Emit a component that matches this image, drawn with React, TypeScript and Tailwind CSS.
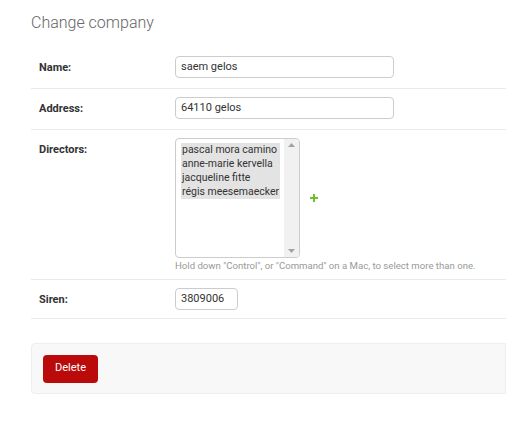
const directors = [
  "pascal mora camino",
  "anne-marie kervella",
  "jacqueline fitte",
  "régis meesemaecker",
];

function Row({ label, children, pb = "pb-[10px]" }: { label: string; children: React.ReactNode; pb?: string }) {
  return (
    <div className={`flex items-start pl-2 pt-2 ${pb} border-b border-[#eaeaea]`}>
      <label className="w-[136px] shrink-0 pt-[5px] text-[11px] font-bold text-[#333] leading-[14px]">{label}</label>
      <div>{children}</div>
    </div>
  );
}

export default function App() {
  return (
    <div className="min-h-[422px] bg-white pl-[31px] pt-[11px] font-['Roboto',sans-serif] text-[#333]">
      <h1 className="text-[16px] font-light text-[#666] leading-[24px] mb-[13px]">Change company</h1>

      <div>
        <Row label="Name:">
          <div className="w-[219px] h-[22px] border border-[#ccc] rounded-[4px] px-[5px] text-[11px] leading-[20px]">saem gelos</div>
        </Row>
        <Row label="Address:">
          <div className="w-[219px] h-[22px] border border-[#ccc] rounded-[4px] px-[5px] text-[11px] leading-[20px]">64110 gelos</div>
        </Row>
        <Row label="Directors:" pb="pb-[8px]">
          <div className="flex items-center">
            <div className="flex w-[125px] h-[120px] border border-[#ccc] rounded-[4px] overflow-hidden">
              <div className="flex-1 pl-[5px] pt-[4px]">
                {directors.map((d) => (
                  <div key={d} className="bg-[#e3e3e3] text-[10.5px] leading-[14px] pl-[1px] w-[99px] whitespace-nowrap">{d}</div>
                ))}
              </div>
              <div className="w-[15px] bg-[#f1f1f1] flex flex-col items-center justify-between py-[4px]">
                <svg width="7" height="4" viewBox="0 0 7 4"><path d="M0 4 L3.5 0 L7 4 Z" fill="#a3a3a3" /></svg>
                <svg width="7" height="4" viewBox="0 0 7 4"><path d="M0 0 L3.5 4 L7 0 Z" fill="#a3a3a3" /></svg>
              </div>
            </div>
            <svg className="ml-[10px]" width="8" height="8" viewBox="0 0 8 8">
              <path d="M3 0h2v3h3v2H5v3H3V5H0V3h3z" fill="#70bf2b" />
            </svg>
          </div>
          <p className="mt-[2px] text-[9.6px] leading-[11px] text-[#999] whitespace-nowrap">
            Hold down "Control", or "Command" on a Mac, to select more than one.
          </p>
        </Row>
        <Row label="Siren:" pb="pb-[8px]">
          <div className="w-[63px] h-[22px] border border-[#ccc] rounded-[4px] px-[5px] text-[11px] leading-[20px]">3809006</div>
        </Row>
      </div>

      <div className="mt-[24px] h-[51px] bg-[#f8f8f8] border border-[#eee] rounded-l-[4px] flex items-center pl-[11px]">
        <button className="h-[28px] px-[12px] bg-[#bb0a0a] rounded-[4px] text-white text-[11px]">Delete</button>
      </div>
    </div>
  );
}
